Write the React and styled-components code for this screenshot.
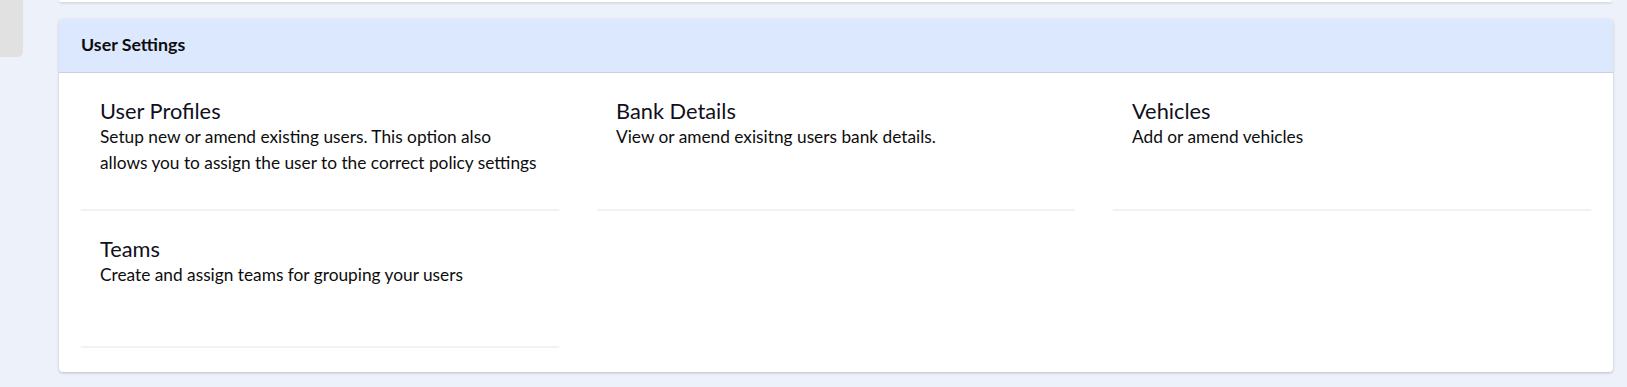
import React from 'react'
import styled, { createGlobalStyle } from 'styled-components';

const GlobalStyle = createGlobalStyle`
  html, body {
    margin: 0;
    padding: 0;
    background: #edf1f9;
    font-family: Lato, "Open Sans", sans-serif;
  }
`

const settings = [
    { title: 'User Profiles', text: 'Setup new or amend existing users. This option also allows you to assign the user to the correct policy settings' },
    { title: 'Bank Details', text: 'View or amend exisitng users bank details.' },
    { title: 'Vehicles', text: 'Add or amend vehicles' },
    { title: 'Teams', text: 'Create and assign teams for grouping your users' },
];

function App() {
    return (
        <>
            <GlobalStyle />
            <Page>
                <Sidebar>
                    <SideTab />
                </Sidebar>
                <Main>
                    <PrevCard />
                    <Card>
                        <CardHeader>User Settings</CardHeader>
                        <Grid>
                            {settings.map((item) => (
                                <Item key={item.title} href="#">
                                    <ItemTitle>{item.title}</ItemTitle>
                                    <ItemText>{item.text}</ItemText>
                                </Item>
                            ))}
                        </Grid>
                    </Card>
                </Main>
            </Page>
        </>
    )
}

export default App;

const Page = styled.div`
    display: flex;
    min-height: 387px;
    box-sizing: border-box;
`
const Sidebar = styled.div`
    width: 23px;
    flex-shrink: 0;
`
const SideTab = styled.div`
    height: 57px;
    background: #e1e1e1;
    border-bottom-right-radius: 5px;
`
const Main = styled.div`
    flex: 1;
    padding: 0 14px 0 36px;
`
const PrevCard = styled.div`
    height: 2px;
    margin-right: 1px;
    background: #ffffff;
    border-radius: 0 0 4px 4px;
    box-shadow: 0 1px 3px rgba(0, 0, 0, 0.18);
`
const Card = styled.div`
    margin-top: 17px;
    background: #ffffff;
    border-radius: 4px;
    box-shadow: 0 1px 3px rgba(0, 0, 0, 0.22);
    overflow: hidden;
`
const CardHeader = styled.div`
    height: 54px;
    box-sizing: border-box;
    display: flex;
    align-items: center;
    padding: 0 22px 4px;
    background: #dce8fd;
    border-bottom: 1px solid #c6d1e3;
    font-size: 17.8px;
    font-weight: 700;
    color: #0d0d0d;
`
const Grid = styled.div`
    display: grid;
    grid-template-columns: repeat(3, 1fr);
    column-gap: 38px;
    padding: 0 22px 24px;
`
const Item = styled.a`
    display: block;
    height: 137.5px;
    box-sizing: border-box;
    padding: 25px 19px 0;
    border-bottom: 2px solid #f2f2f2;
    text-decoration: none;
    color: #0d0d0d;
`
const ItemTitle = styled.div`
    font-size: 21.8px;
    line-height: 26px;
    color: #10101c;
`
const ItemText = styled.div`
    font-size: 17.3px;
    line-height: 25.5px;
    color: #0d0d0d;
`
